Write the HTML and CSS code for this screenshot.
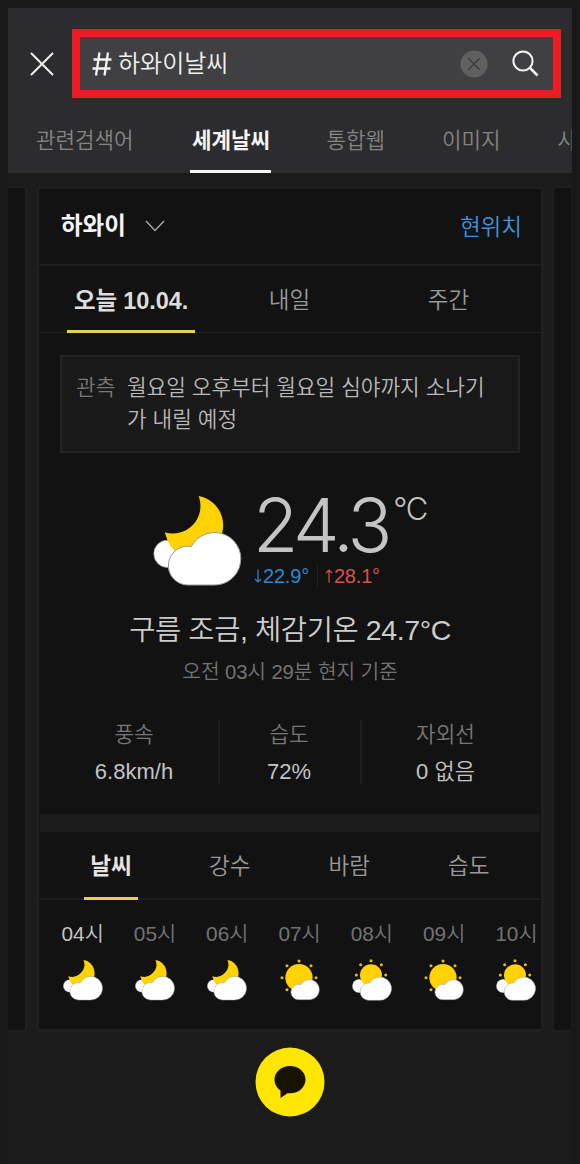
FILE: index.html
```html
<!DOCTYPE html>
<html lang="ko">
<head>
<meta charset="utf-8">
<title>하와이날씨</title>
<link rel="stylesheet" href="styles.css">
</head>
<body>
<svg class="defs" width="0" height="0">
  <symbol id="moon" viewBox="38 45 267 274">
    <circle cx="81" cy="222" r="41" fill="#fff" stroke="#aaa" stroke-width="2"/>
    <path d="M175 48A89.5 89.5 0 0 1 222 200L143 250L98 208Q82 190 73 157A83 83 0 0 0 175 48Z" fill="#ffd200"/>
    <path d="M143 316A58.5 58.5 0 1 1 153 200A79 79 0 1 1 222 316Z" fill="#fff" stroke="#999" stroke-width="3"/>
  </symbol>
  <symbol id="sun" viewBox="402 478 120 126">
    <g fill="#e8b830"><circle cx="459" cy="484" r="4.5"/><circle cx="495" cy="498" r="4.5"/><circle cx="510" cy="534" r="4.5"/><circle cx="423" cy="498" r="4.5"/><circle cx="408" cy="534" r="4.5"/><circle cx="423" cy="570" r="4.5"/></g>
    <circle cx="459" cy="534" r="41" fill="#ffd200"/>
    <path d="M460 600A23 23 0 1 1 464 555A30 30 0 1 1 490 600Z" fill="#fff" stroke="#999" stroke-width="1.5"/>
  </symbol>
  <symbol id="cloudy" viewBox="183 478 120 126">
    <g fill="#e8b830"><circle cx="240" cy="483" r="4.5"/><circle cx="271" cy="495" r="4.5"/><circle cx="284" cy="526" r="4.5"/><circle cx="209" cy="495" r="4.5"/><circle cx="196" cy="526" r="4.5"/></g>
    <circle cx="204" cy="559" r="20" fill="#fff"/>
    <circle cx="240" cy="527" r="33" fill="#ffd200"/>
    <path d="M231 602A26 26 0 1 1 236 550A35 35 0 1 1 267 602Z" fill="#fff" stroke="#999" stroke-width="1.5"/>
  </symbol>
</svg>
<div class="app">
  <header class="header">
    <div class="search-row">
      <svg class="close" viewBox="0 0 24 24"><path d="M1 1L23 23M23 1L1 23" fill="none" stroke="#f2f2f2" stroke-width="2"/></svg>
      <div class="search">
        <svg class="hash" viewBox="0 0 20 24"><path d="M7.500 0.500L4 23.500M16 0.500L12.500 23.500M1.500 7.500H19.500M0.500 16.500H18.500" fill="none" stroke="#f2f2f2" stroke-width="2.300"/></svg><span class="query">하와이날씨</span>
        <svg class="clear" viewBox="0 0 28 28"><circle cx="14" cy="14" r="13.6" fill="#606060"/><path d="M8.3 8.3L19.7 19.7M19.7 8.3L8.3 19.7" fill="none" stroke="#3c3c3c" stroke-width="1.5"/></svg>
        <svg class="lens" viewBox="0 0 27 27"><circle cx="11" cy="11" r="9.6" fill="none" stroke="#f4f4f4" stroke-width="2"/><path d="M17.7 17.7L25.5 25.5" stroke="#f4f4f4" stroke-width="2.6"/></svg>
      </div>
    </div>
    <nav class="tabs"><span>관련검색어</span><span class="on">세계날씨</span><span>통합웹</span><span>이미지</span><span>사</span></nav>
  </header>
  <main class="carousel">
    <div class="peek left"></div>
    <section class="card">
      <div class="place"><strong>하와이</strong><svg class="chev" viewBox="0 0 20 12"><path d="M1 1L10 10.5L19 1" fill="none" stroke="#aaa" stroke-width="1.4"/></svg><a class="here">현위치</a></div>
      <nav class="days"><span class="on">오늘 10.04.</span><span>내일</span><span>주간</span></nav>
      <div class="notice"><span class="label">관측</span><p>월요일 오후부터 월요일 심야까지 소나기<br>가 내릴 예정</p></div>
      <div class="now">
        <svg class="big"><use href="#moon"/></svg>
        <div class="temps">
          <div class="temp"><span class="num">24.3</span><span class="unit">°C</span></div>
          <div class="range"><span class="low"><svg viewBox="0 0 8 14"><path d="M4 0.5V13M1 10L4 13L7 10" fill="none" stroke="currentColor" stroke-width="1.2"/></svg>22.9°</span><span class="high"><svg viewBox="0 0 8 14"><path d="M4 13.5V1M1 4L4 1L7 4" fill="none" stroke="currentColor" stroke-width="1.2"/></svg>28.1°</span></div>
        </div>
      </div>
      <div class="summary">구름 조금, 체감기온 24.7°C</div>
      <div class="time">오전 03시 29분 현지 기준</div>
      <dl class="stats">
        <div><dt>풍속</dt><dd>6.8km/h</dd></div>
        <div><dt>습도</dt><dd>72%</dd></div>
        <div><dt>자외선</dt><dd>0 없음</dd></div>
      </dl>
      <div class="gapbar"></div>
      <nav class="kinds"><span class="on">날씨</span><span>강수</span><span>바람</span><span>습도</span></nav>
      <div class="hours">
        <div class="on">04시<svg><use href="#moon"/></svg></div>
        <div>05시<svg><use href="#moon"/></svg></div>
        <div>06시<svg><use href="#moon"/></svg></div>
        <div>07시<svg><use href="#sun"/></svg></div>
        <div>08시<svg><use href="#cloudy"/></svg></div>
        <div>09시<svg><use href="#sun"/></svg></div>
        <div>10시<svg><use href="#cloudy"/></svg></div>
      </div>
    </section>
    <div class="peek right"></div>
  </main>
  <footer class="footer">
    <svg class="talk" viewBox="0 0 70 70"><circle cx="35" cy="35" r="34.5" fill="#ffe600"/><path d="M35 19C26.300 19 19.500 25 19.500 32.500C19.500 37.500 22 41.300 25.500 43.500V51L32.500 46.200C43 47.500 50.500 40.500 50.500 32.500C50.500 25 43.700 19 35 19Z" fill="#171300"/></svg>
  </footer>
</div>
</body>
</html>
```
FILE: styles.css
```css
* { box-sizing: border-box; margin: 0; padding: 0; }
body { width: 580px; height: 1164px; padding: 8px; background: #181818; overflow: hidden; font-family: "Liberation Sans", "Noto Sans CJK KR", sans-serif; font-weight: 350; color: #ccc; }
svg { display: block; flex: none; }
.defs { position: absolute; }
.app { width: 564px; height: 1156px; background: #1b1b1b; overflow: hidden; }

.header { height: 165px; background: #2c2c2e; padding-top: 21px; }
.search-row { display: flex; align-items: center; padding-left: 22px; height: 69px; }
.close { width: 24px; height: 24px; margin-right: 18px; }
.search { width: 489px; height: 69px; border: 8px solid #ec1c24; background: #404042; display: flex; align-items: center; padding: 0 14px 0 12px; color: #f0f0f0; font-size: 24px; line-height: 34px; }
.hash { width: 20px; height: 24px; margin-right: 6px; }
.query { padding-top: 1px; }
.clear { width: 28px; height: 28px; margin-left: auto; margin-right: 24px; }
.lens { width: 27px; height: 27px; }
.tabs { display: flex; height: 75px; padding: 0 0 0 28px; font-size: 21.200px; line-height: 85px; color: #858585; white-space: nowrap; }
.tabs span { margin-right: 57px; height: 75px; flex: none; }
.tabs .on { color: #f5f5f5; font-weight: 700; border-bottom: 3px solid #f5f5f5; width: 81px; text-align: center; margin-right: 55px; }

.carousel { display: flex; gap: 9px; height: 859px; padding-top: 13px; }
.peek { width: 19px; height: 846px; background: #121212; border: 2px solid #1f1f1f; flex: none; }
.peek.left { border-left: 0; border-radius: 0 4px 4px 0; }
.peek.right { border-right: 0; border-radius: 4px 0 0 4px; margin-left: -1px; }
.card { width: 508px; height: 846px; background: #121212; border: 3px solid #1f1f1f; border-radius: 5px; flex: none; overflow: hidden; }
.place { display: flex; align-items: center; height: 77px; border-bottom: 2px solid #1d1d1d; padding: 0 19px 0 22px; line-height: 34px; }
.place strong { font-size: 23.500px; font-weight: 700; color: #f5f5f5; margin-top: -1px; }
.chev { width: 20px; height: 12px; margin-left: 19px; margin-top: -1px; }
.here { margin-left: auto; font-size: 22.500px; color: #4193dc; margin-top: 3px; }
.days { display: flex; height: 67px; border-bottom: 1px solid #222; font-size: 22.500px; line-height: 70px; color: #999; padding-left: 28px; }
.days span { width: 159px; text-align: center; }
.days .on { width: 128px; margin-right: 15px; height: 67px; border-bottom: 3px solid #e8d24a; color: #ddd; white-space: nowrap; font-weight: 700; font-size: 23.500px; letter-spacing: -.1px; }
.notice { display: flex; margin: 22px 0 0 21px; width: 460px; height: 98px; background: #191919; border: 2px solid #242424; padding: 15px 14px; font-size: 21.350px; line-height: 32px; color: #b8b8b8; white-space: nowrap; }
.label { width: 51px; color: #777; }
.now { display: flex; height: 157px; padding: 42px 0 0 114px; }
.big { width: 89px; height: 91px; }
.temps { margin-left: 11px; }
.temp { display: flex; height: 69px; color: #c4c4c4; }
.num { font-family: Inter, sans-serif; font-weight: 300; font-size: 74px; line-height: 60px; letter-spacing: -4.200px; }
.unit { font-family: Inter, sans-serif; font-weight: 300; font-size: 31px; line-height: 27px; margin-left: 5px; letter-spacing: -1.200px; }
.range { display: flex; font-size: 20px; line-height: 24px; letter-spacing: -.2px; padding-left: 1px; }
.range span { display: flex; align-items: center; height: 24px; }
.range svg { width: 8px; height: 14px; margin-right: 1px; }
.low { color: #2f86d2; padding-right: 8px; }
.high { color: #d9534f; padding-left: 7px; }
.range .high { border-left: 1px solid #222; }
.summary { text-align: center; font-size: 28.500px; line-height: 40px; height: 46px; letter-spacing: -.4px; }
.time { text-align: center; font-size: 20.300px; line-height: 33px; height: 64px; color: #737373; letter-spacing: -.1px; }
.stats { display: grid; grid-template-columns: 179px 142px 1fr; height: 94px; text-align: center; }
.stats > div { height: 64px; border-left: 2px solid #1d1d1d; }
.stats > div:first-child { border: 0; padding-left: 11px; }
.stats > div:nth-child(2) { padding-right: 2px; }
.stats > div:last-child { padding-right: 12px; }
.stats dt { font-size: 21.300px; line-height: 30px; color: #777; }
.stats dd { font-size: 22px; line-height: 44px; color: #c4c4c4; }
.gapbar { height: 18px; background: #1b1b1b; margin: 0 1px; }
.kinds { display: flex; height: 68px; border-bottom: 2px solid #1d1d1d; padding-left: 45px; font-size: 22.500px; line-height: 70px; color: #999; }
.kinds span { width: 119.500px; text-align: center; }
.kinds .on { width: 54px; height: 68px; margin-right: 32px; color: #e4e4e4; font-weight: 700; border-bottom: 3px solid #e8d24a; }
.hours { display: flex; padding: 20px 0 0 7.500px; font-size: 20.800px; line-height: 28px; color: #737373; }
.hours div { width: 72.300px; flex: none; text-align: center; }
.hours .on { color: #c4c4c4; }
.hours svg { width: 40px; height: 42px; margin: 11px auto 0; }
.footer { display: flex; justify-content: center; padding-top: 15px; }
.talk { width: 70px; height: 70px; }
```
